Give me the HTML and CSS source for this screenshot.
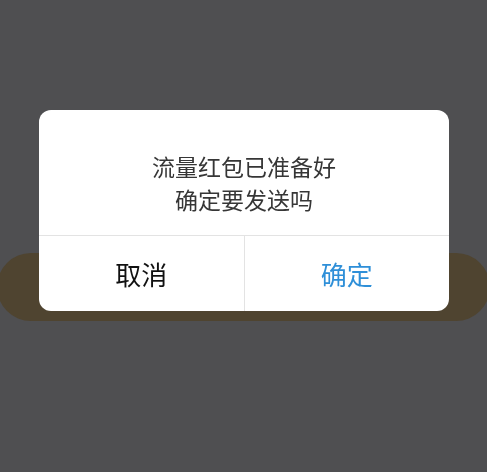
FILE: index.html
```html
<!DOCTYPE html>
<html lang="zh-CN">
<head>
  <meta charset="UTF-8">
  <title>发送流量红包</title>
  <meta name="viewport" content="width=device-width, initial-scale=1.0">
  <link rel="stylesheet" href="styles.css">
</head>
<body>
  <div class="page">
    <div class="send-bar"></div>
  </div>

  <div class="mask">
    <div class="dialog">
      <div class="dialog-body">
        流量红包已准备好<br>
        确定要发送吗
      </div>
      <div class="dialog-actions">
        <button class="dialog-btn cancel-btn">取消</button>
        <button class="dialog-btn confirm-btn">确定</button>
      </div>
    </div>
  </div>
</body>
</html>
```

FILE: styles.css
```css
html, body {
  margin: 0;
  height: 100%;
}

body {
  background: #4f4f51;
  font-family: 'Noto Sans CJK SC', 'Noto Sans', sans-serif;
  overflow: hidden;
}

.page {
  padding-top: 253px;
  margin: 0 -3px;
}

.send-bar {
  height: 68px;
  border-radius: 34px;
  background: #4f4430;
}

.mask {
  position: fixed;
  inset: 0;
  display: flex;
  justify-content: center;
  align-items: flex-start;
  padding-top: 110px;
}

.dialog {
  width: 410px;
  margin-left: 1px;
  background: #fff;
  border-radius: 12px;
  overflow: hidden;
}

.dialog-body {
  padding: 40px 20px 19px;
  font-size: 23px;
  line-height: 33px;
  color: #363636;
  text-align: center;
  border-bottom: 1px solid #e3e3e3;
}

.dialog-actions {
  display: flex;
  height: 75px;
}

.dialog-btn {
  flex: 1;
  border: none;
  background: none;
  font-family: inherit;
  font-size: 26px;
  padding: 0;
  cursor: pointer;
}

.cancel-btn {
  color: #111;
  border-right: 1px solid #e3e3e3;
}

.confirm-btn {
  color: #2e8fd8;
}
```
